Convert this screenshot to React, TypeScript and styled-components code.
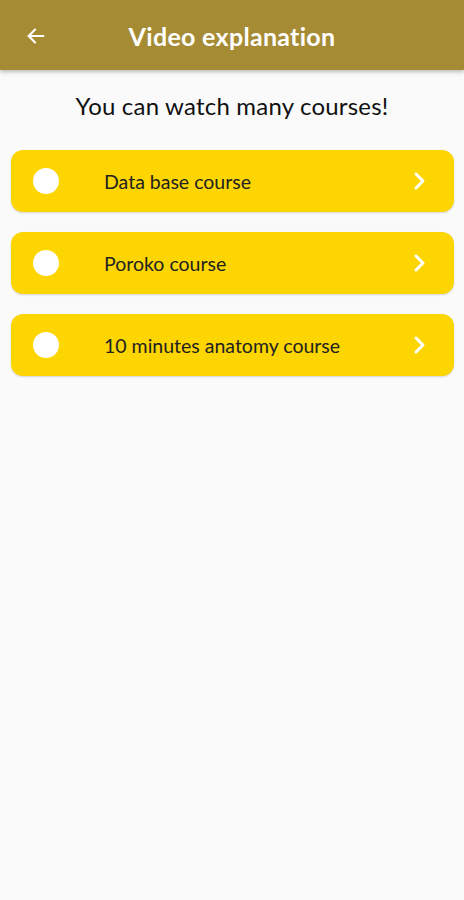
import React from 'react'
import styled, { createGlobalStyle } from 'styled-components'

const GlobalStyle = createGlobalStyle`
  html, body {
    margin: 0;
    padding: 0;
    background: #fafafa;
    font-family: Lato, 'Noto Sans', sans-serif;
  }
`

const Page = styled.div`
  width: 464px;
  min-height: 900px;
  background: #fafafa;
`

const Header = styled.header`
  height: 70px;
  background: #a68b35;
  box-shadow: 0 2px 4px rgba(0, 0, 0, 0.25);
  display: flex;
  align-items: center;
  justify-content: center;
  position: relative;
`

const BackButton = styled.button`
  position: absolute;
  left: 22px;
  top: 22px;
  width: 28px;
  height: 28px;
  padding: 0;
  border: none;
  background: transparent;
  display: flex;
  align-items: center;
  justify-content: center;
`

const Title = styled.h1`
  margin: 0 0 -2px;
  color: #fff;
  font-size: 25px;
  font-weight: 700;
  letter-spacing: 0.3px;
`

const Subtitle = styled.p`
  margin: 0;
  padding: 22px 0 30px;
  text-align: center;
  font-size: 24px;
  color: #111;
  line-height: 28px;
  letter-spacing: 0.2px;
`

const List = styled.div`
  display: flex;
  flex-direction: column;
  gap: 20px;
  padding: 0 10px 0 11px;
`

const Card = styled.div`
  height: 62px;
  border-radius: 12px;
  background: #fdd500;
  box-shadow: 0 1px 2px rgba(0, 0, 0, 0.15);
  display: flex;
  align-items: center;
  padding: 0 28px 0 22px;
`

const Dot = styled.span`
  width: 26px;
  height: 26px;
  border-radius: 50%;
  background: #fff;
  flex-shrink: 0;
`

const Label = styled.span`
  flex: 1;
  margin-left: 45px;
  font-size: 19.5px;
  color: #222;
`

const courses = ['Data base course', 'Poroko course', '10 minutes anatomy course']

export default function App () {
  return (
    <Page>
      <GlobalStyle />
      <Header>
        <BackButton>
          <svg width="22" height="22" viewBox="0 0 24 24" fill="none" stroke="#fff" strokeWidth="2.4" strokeLinecap="round" strokeLinejoin="round">
            <path d="M20 12H4" />
            <path d="M11 5l-7 7 7 7" />
          </svg>
        </BackButton>
        <Title>Video explanation</Title>
      </Header>
      <Subtitle>You can watch many courses!</Subtitle>
      <List>
        {courses.map((c) => (
          <Card key={c}>
            <Dot />
            <Label>{c}</Label>
            <svg width="14" height="22" viewBox="0 0 14 22" fill="none" stroke="#fff" strokeWidth="3" strokeLinecap="round" strokeLinejoin="round">
              <path d="M4 4l7 7-7 7" />
            </svg>
          </Card>
        ))}
      </List>
    </Page>
  )
}
